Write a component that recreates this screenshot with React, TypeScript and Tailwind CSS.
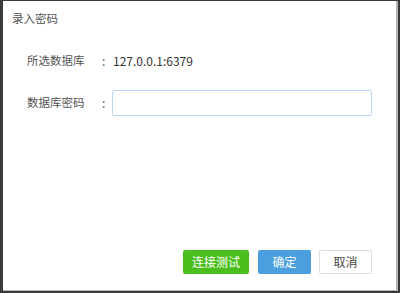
export default function App() {
  const font = { fontFamily: '"Microsoft YaHei", "Noto Sans CJK SC", "Noto Sans", sans-serif' };
  return (
    <div className="w-[400px] h-[293px] bg-[#3a3a3a] pl-[3px] pt-[1px] pr-[2px] pb-[2px]" style={font}>
      <div className="w-full h-full bg-[#b5b5b5] pr-[2px] pb-[1px]">
        <div className="w-full h-full bg-white flex flex-col">
          <div className="pt-[9px] pl-[9px] text-[11.5px] leading-[16px] text-[#555]">录入密码</div>

          <div className="mt-[25px] pl-[24px] flex items-center text-[11.5px] text-[#555] h-[20px]">
            <span className="w-[75px]">所选数据库</span>
            <span className="w-[11px] text-[12px]">:</span>
            <span className="text-[#333] text-[12px]">127.0.0.1:6379</span>
          </div>

          <div className="mt-[19px] pl-[24px] pr-[24px] flex items-center text-[11.5px] text-[#555]">
            <span className="w-[75px]">数据库密码</span>
            <span className="w-[10px] text-[12px]">:</span>
            <input
              type="password"
              aria-label="数据库密码"
              className="flex-1 h-[26px] border border-[#b9d7f5] rounded-[2px] outline-none px-2 text-[12px]"
            />
          </div>

          <div className="mt-auto mb-[16px] pr-[24px] flex justify-end gap-[8px] text-[12px]">
            <button className="w-[66px] h-[24px] rounded-[2px] bg-[#4cbf1e] text-white mr-[1px]">连接测试</button>
            <button className="w-[53px] h-[24px] rounded-[2px] bg-[#4b9fde] text-white">确定</button>
            <button className="w-[53px] h-[24px] rounded-[2px] bg-white border border-[#dcdcdc] text-[#444]">取消</button>
          </div>
        </div>
      </div>
    </div>
  );
}
